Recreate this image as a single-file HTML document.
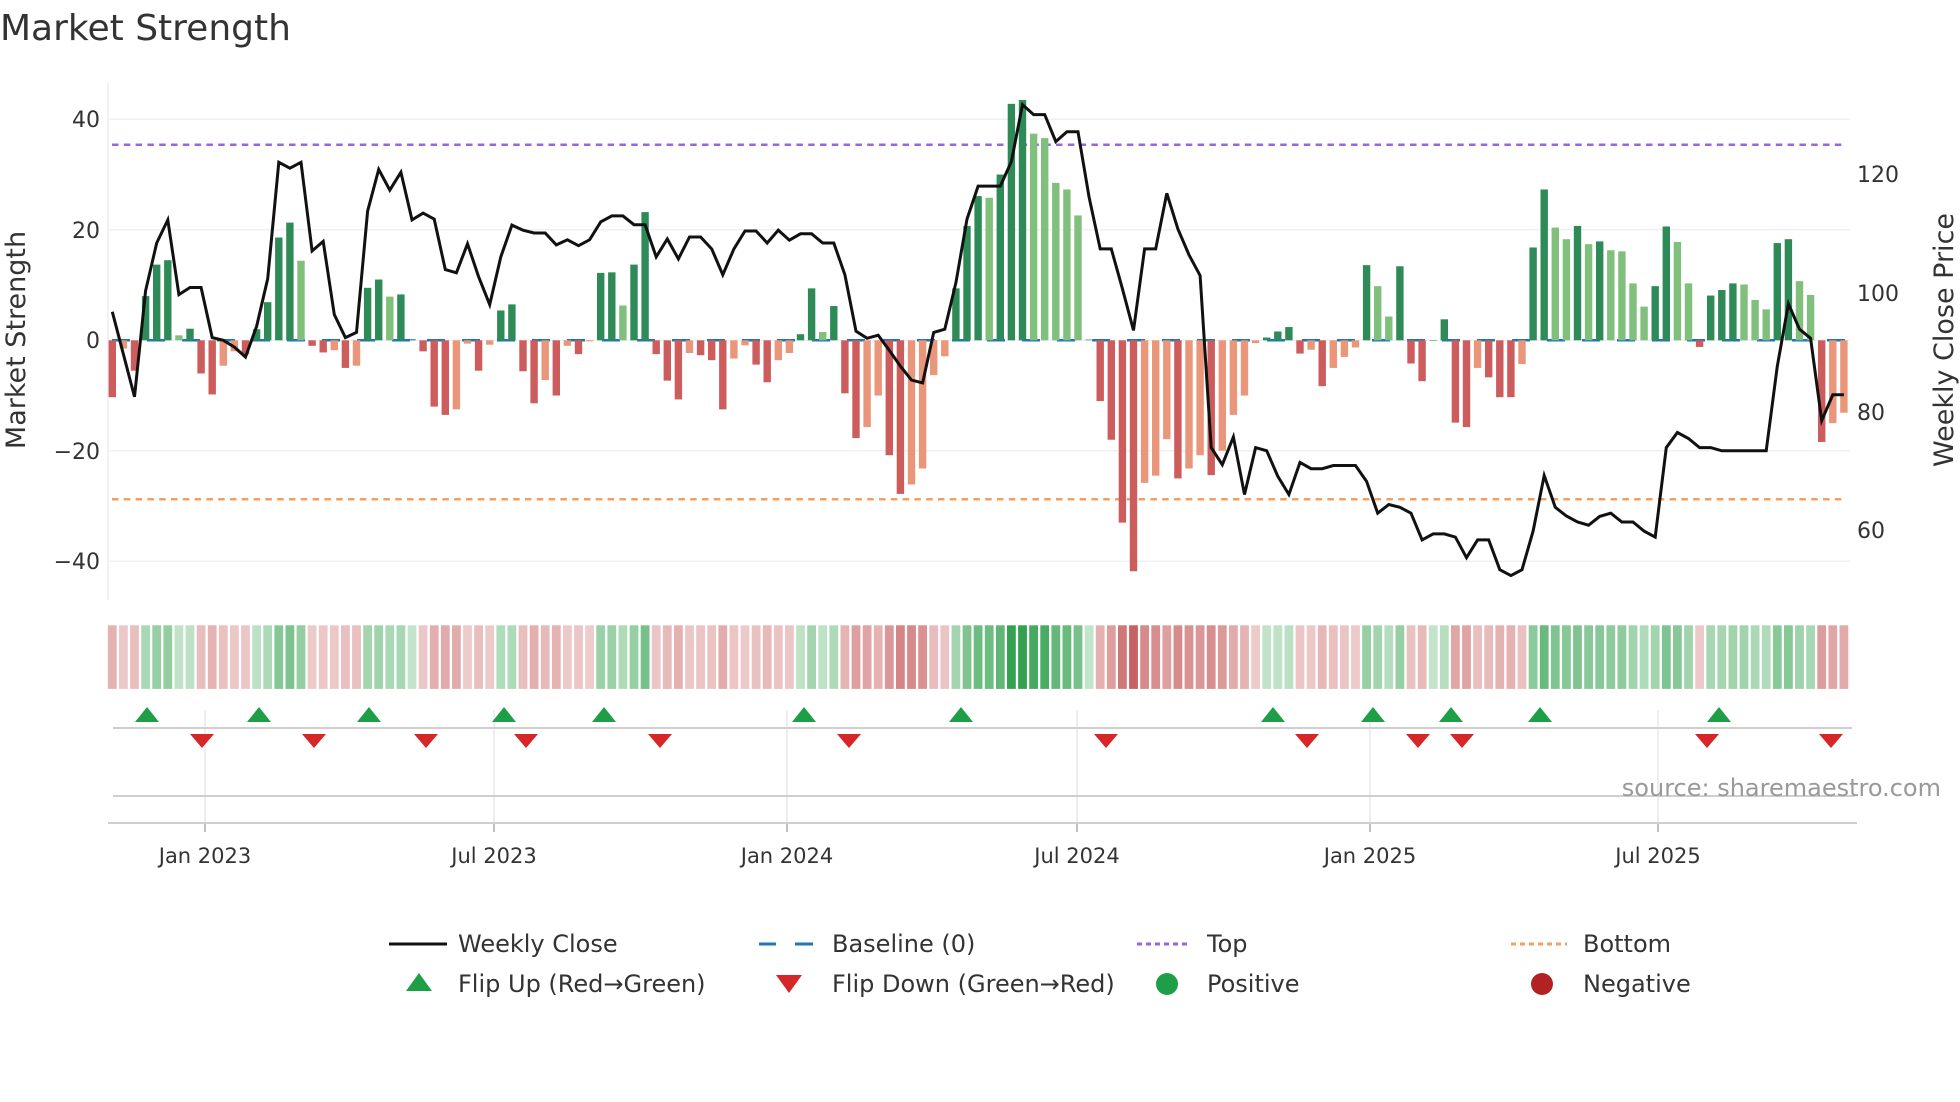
<!DOCTYPE html>
<html><head><meta charset="utf-8">
<style>
html,body{margin:0;padding:0;background:#fff;overflow:hidden;}
svg{display:block;font-family:"DejaVu Sans","Liberation Sans",sans-serif;}
</style></head>
<body>
<svg id="s" width="1960" height="1102" viewBox="0 0 1960 1102" xmlns="http://www.w3.org/2000/svg">
<text x="0" y="40" font-size="36" fill="#333">Market Strength</text>
<g id="grid"></g>
<g id="bars"></g>
<g id="heat"></g>
<g id="marks"></g>
<g font-size="22" fill="#333" text-anchor="end">
<text x="100" y="127">40</text>
<text x="100" y="238">20</text>
<text x="100" y="348">0</text>
<text x="100" y="459">−20</text>
<text x="100" y="569">−40</text>
</g>
<g font-size="22" fill="#333">
<text x="1857" y="182">120</text>
<text x="1857" y="301">100</text>
<text x="1857" y="420">80</text>
<text x="1857" y="538">60</text>
</g>
<text transform="translate(25,340) rotate(-90)" font-size="27" fill="#333" text-anchor="middle">Market Strength</text>
<text transform="translate(1953,340) rotate(-90)" font-size="27" fill="#333" text-anchor="middle">Weekly Close Price</text>
<g font-size="21" fill="#333" text-anchor="middle">
<text x="205" y="863">Jan 2023</text>
<text x="494" y="863">Jul 2023</text>
<text x="787" y="863">Jan 2024</text>
<text x="1077" y="863">Jul 2024</text>
<text x="1370" y="863">Jan 2025</text>
<text x="1658" y="863">Jul 2025</text>
</g>
<text x="1941" y="796" font-size="24" fill="#999" text-anchor="end">source: sharemaestro.com</text>
<g font-size="24" fill="#333">
<line x1="389" y1="944" x2="447" y2="944" stroke="#111" stroke-width="3"/>
<text x="458" y="952">Weekly Close</text>
<line x1="759" y1="944" x2="776" y2="944" stroke="#1f77b4" stroke-width="3"/>
<line x1="795" y1="944" x2="813" y2="944" stroke="#1f77b4" stroke-width="3"/>
<text x="832" y="952">Baseline (0)</text>
<line x1="1137" y1="944" x2="1191" y2="944" stroke="#9b66dd" stroke-width="3" stroke-dasharray="5,4"/>
<text x="1207" y="952">Top</text>
<line x1="1511" y1="944" x2="1567" y2="944" stroke="#f0a060" stroke-width="3" stroke-dasharray="5,4"/>
<text x="1583" y="952">Bottom</text>
<polygon points="406,991 432,991 419,973" fill="#1e9e46"/>
<text x="458" y="992">Flip Up (Red→Green)</text>
<polygon points="776,975 802,975 789,993" fill="#d62728"/>
<text x="832" y="992">Flip Down (Green→Red)</text>
<circle cx="1167" cy="984" r="11" fill="#1e9e46"/>
<text x="1207" y="992">Positive</text>
<circle cx="1542" cy="984" r="11" fill="#b22222"/>
<text x="1583" y="992">Negative</text>
</g>
</svg>
<script>
(function(){
var NS="http://www.w3.org/2000/svg";
function el(p,t,a){var e=document.createElementNS(NS,t);for(var k in a)e.setAttribute(k,a[k]);p.appendChild(e);return e;}
var v=[-10.3,-1.5,-5.5,8,13.7,14.5,0.9,2.1,-6,-9.8,-4.6,-2,-2.5,2,6.9,18.6,21.3,14.4,-1,-2.2,-1.8,-5,-4.6,9.5,11,7.9,8.3,0.2,-2,-12,-13.5,-12.5,-0.6,-5.5,-0.8,5.4,6.5,-5.6,-11.4,-7.2,-10,
-1,-2.5,-0.2,12.2,12.3,6.3,13.7,23.2,-2.5,-7.3,-10.7,-2.3,-2.7,-3.6,-12.5,-3.3,-0.9,-4.4,-7.6,-3.6,-2.3,1.1,9.4,1.5,6.2,-9.6,-17.7,-15.7,-10,-20.8,-27.8,-26.1,-23.2,-6.3,-2.9,9.4,20.7,26.1,25.8,30,42.8,
43.5,37.4,36.6,28.5,27.3,22.6,0.2,-11,-18,-33,-41.8,-25.8,-24.5,-17.9,-25,-23.2,-20.8,-24.4,-20,-13.5,-10,-0.5,0.5,1.6,2.4,-2.4,-1.7,-8.3,-5,-3,-1.3,13.6,9.8,4.3,13.4,-4.2,-7.4,0,3.8,-14.9,-15.7,
-5,-6.7,-10.3,-10.3,-4.3,16.8,27.3,20.4,18.3,20.7,17.4,17.9,16.3,16.1,10.3,6.1,9.8,20.6,17.8,10.3,-1.2,8.1,9.1,10.3,10.1,7.3,5.6,17.6,18.3,10.7,8.2,-18.4,-15,-13.1];
var light={6:1,17:1,25:1,46:1,64:1,79:1,83:1,84:1,85:1,86:1,87:1,88:1,114:1,115:1,130:1,131:1,133:1,135:1,136:1,137:1,138:1,141:1,142:1,147:1,148:1,149:1,152:1,153:1};
var salmon={1:1,10:1,11:1,20:1,22:1,31:1,32:1,34:1,39:1,41:1,43:1,52:1,56:1,57:1,60:1,61:1,68:1,69:1,72:1,73:1,74:1,75:1,93:1,94:1,95:1,97:1,98:1,100:1,101:1,102:1,103:1,108:1,110:1,111:1,112:1,123:1,127:1,155:1,156:1};
var ly=[583,690,797,530,410,352,540,522,522,648,655,672,697,620,500,207,222,207,430,406,590,648,635,330,225,277,232,352,335,350,477,485,412,495,565,445,365,378,385,385,415,
402,417,402,357,342,342,364,364,445,400,450,395,395,425,490,425,380,380,410,378,403,387,387,410,410,490,632,650,642,680,720,755,762,635,627,510,350,267,267,267,205,
62,87,87,155,130,130,295,425,425,525,630,425,425,285,375,440,492,925,968,898,1043,925,933,997,1043,962,978,978,970,970,970,1010,1090,1068,1075,1090,1157,1142,1142,1150,1202,
1157,1157,1232,1247,1232,1135,995,1075,1097,1112,1120,1098,1090,1112,1112,1135,1150,925,887,902,925,925,933,933,933,933,933,720,563,627,650,857,792,792];
var X0=112.3,DX=11.1,Z=340.3,U=5.525;
var g=document.getElementById('grid');
el(g,'line',{x1:108,y1:82,x2:108,y2:600,stroke:'#eceef2','stroke-width':1.5});
[119.3,229.8,340.3,450.8,561.3].forEach(function(y){el(g,'line',{x1:108,y1:y,x2:1850,y2:y,stroke:'#eef0f4','stroke-width':1.5});});
el(g,'line',{x1:112,y1:340.3,x2:1848,y2:340.3,stroke:'#1f77b4','stroke-width':2.5,'stroke-dasharray':'18,17'});
el(g,'line',{x1:112,y1:144.8,x2:1844,y2:144.8,stroke:'#9b66dd','stroke-width':2.5,'stroke-dasharray':'6.5,5.3'});
el(g,'line',{x1:112,y1:499.3,x2:1844,y2:499.3,stroke:'#f0a060','stroke-width':2.5,'stroke-dasharray':'6.5,5.3'});
var b=document.getElementById('bars'),h=document.getElementById('heat');
var pts=[];
for(var i=0;i<v.length;i++){
 var x=X0+i*DX,val=v[i],col;
 if(val>=0)col=light[i]?'#80bf7c':'#2e8b57';else col=salmon[i]?'#e9967a':'#cd5c5c';
 var hgt=Math.abs(val)*U;
 el(b,'rect',{x:x-3.7,y:val>=0?Z-hgt:Z,width:7.4,height:Math.max(hgt,0.5),fill:col});
 var t=Math.min(1,Math.abs(val)/44),c;
 t=0.15+0.85*t;
 if(val>=0)c='rgb('+Math.round(220-(220-50)*t)+','+Math.round(240-(240-160)*t)+','+Math.round(224-(224-78)*t)+')';
 else c='rgb('+Math.round(245-(245-198)*t)+','+Math.round(224-(224-92)*t)+','+Math.round(224-(224-92)*t)+')';
 el(h,'rect',{x:x-4.4,y:625.3,width:8.8,height:63.6,fill:c});
 pts.push(x.toFixed(1)+','+(80+ly[i]/2.516).toFixed(1));
}
el(b,'polyline',{points:pts.join(' '),fill:'none',stroke:'#111','stroke-width':3,'stroke-linejoin':'miter'});
var m=document.getElementById('marks');
[205,494,787,1077,1370,1658].forEach(function(x){
 el(m,'line',{x1:x,y1:710,x2:x,y2:823,stroke:'#e6e8ec','stroke-width':1.5});
 el(m,'line',{x1:x,y1:823,x2:x,y2:832,stroke:'#aaa','stroke-width':1.5});
});
el(m,'line',{x1:113,y1:728,x2:1852,y2:728,stroke:'#cfcfcf','stroke-width':2});
el(m,'line',{x1:113,y1:796,x2:1855,y2:796,stroke:'#cfcfcf','stroke-width':2});
el(m,'line',{x1:108,y1:823,x2:1857,y2:823,stroke:'#cfcfcf','stroke-width':2});
[147,259,369,504,604,804,961,1273,1373,1451,1540,1719].forEach(function(x){
 el(m,'polygon',{points:(x-12)+',722 '+(x+12)+',722 '+x+',707',fill:'#1e9e46'});});
[202,314,426,526,660,849,1106,1307,1418,1462,1707,1831].forEach(function(x){
 el(m,'polygon',{points:(x-12)+',734 '+(x+12)+',734 '+x+',748',fill:'#d62728'});});
})();
</script>
</body></html>
